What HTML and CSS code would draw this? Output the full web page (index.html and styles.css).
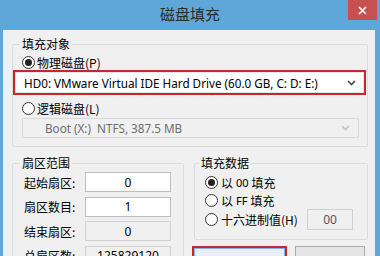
FILE: index.html
```html
<!DOCTYPE html>
<html lang="zh-CN">
<head>
    <meta charset="utf-8">
    <title>磁盘填充</title>
    <link rel="stylesheet" href="styles.css">
</head>
<body>
    <div class="window">
        <div class="titlebar">
            <span></span>
            <div class="title">磁盘填充</div>
            <div class="close">
                <svg width="9" height="9" viewBox="0 0 9 9"><path d="M1 1L8 8M8 1L1 8" stroke="#fff" stroke-width="1.6"/></svg>
            </div>
        </div>
        <div class="client">
            <fieldset class="group target">
                <legend>填充对象</legend>
                <div class="radio-row"><span class="radio checked"></span>物理磁盘(P)</div>
                <div class="combo highlight">
                    <span>HD0: VMware Virtual IDE Hard Drive (60.0 GB, C: D: E:)</span>
                    <svg width="9" height="6" viewBox="0 0 9 6"><path d="M1 1L4.5 4.5L8 1" fill="none" stroke="#4a4a4a" stroke-width="1.6"/></svg>
                </div>
                <div class="radio-row"><span class="radio"></span>逻辑磁盘(L)</div>
                <div class="combo disabled">
                    <span>Boot (X:)&nbsp;&nbsp;NTFS, 387.5 MB</span>
                    <svg width="9" height="6" viewBox="0 0 9 6"><path d="M1 1L4.5 4.5L8 1" fill="none" stroke="#c4c4c4" stroke-width="1.6"/></svg>
                </div>
            </fieldset>
            <div class="lower">
                <fieldset class="group range">
                    <legend>扇区范围</legend>
                    <div class="field"><span class="label">起始扇区:</span><div class="input">0</div></div>
                    <div class="field"><span class="label">扇区数目:</span><div class="input">1</div></div>
                    <div class="field"><span class="label">结束扇区:</span><div class="input off">0</div></div>
                    <div class="field"><span class="label">总扇区数:</span><div class="input off">125829120</div></div>
                </fieldset>
                <div class="right-col">
                    <fieldset class="group data">
                        <legend>填充数据</legend>
                        <div class="radio-row"><span class="radio checked"></span>以 <span class="latin">00</span> 填充</div>
                        <div class="radio-row"><span class="radio"></span>以 <span class="latin">FF</span> 填充</div>
                        <div class="radio-row hex">
                            <span class="radio"></span>十六进制值(H)
                            <div class="input off hex-input">00</div>
                        </div>
                    </fieldset>
                    <div class="buttons">
                        <div class="btn primary"></div>
                        <div class="btn"></div>
                    </div>
                </div>
            </div>
        </div>
    </div>
</body>
</html>
```

FILE: styles.css
```css
* { margin: 0; padding: 0; box-sizing: border-box; }
body {
    width: 380px; height: 256px; overflow: hidden;
    font-family: "Noto Sans", "Noto Sans CJK SC", sans-serif;
    font-size: 12px; color: #000;
}
.window {
    width: 380px; height: 256px; background: #5ea7d7;
    display: flex; flex-direction: column; overflow: hidden;
}
.titlebar {
    height: 30px; flex: none;
    display: grid; grid-template-columns: 1fr auto 1fr;
}
.title {
    font-family: "Noto Sans CJK SC", sans-serif;
    font-size: 15px; color: #2b2b2b; line-height: 28px;
}
.close {
    justify-self: end; margin-right: 3px;
    width: 29px; height: 20px; background: #c75050;
    display: flex; justify-content: center; align-items: center;
}
.client {
    flex: 1; background: #f0f0f0;
    margin: 0 5px 0 3px; padding: 6px 7px 0 9px;
}
.group {
    border: 1px solid #dcdcdc; border-radius: 2px;
    font-family: "Noto Sans CJK SC", sans-serif;
}
.group legend {
    padding: 0 2px; margin-left: 7px; line-height: 16px;
}
.target { padding: 2px 1px 8px 0; }
.radio-row {
    display: flex; align-items: center; height: 16px;
    font-family: "Noto Sans CJK SC", sans-serif;
}
.radio {
    width: 13px; height: 13px; border-radius: 50%;
    border: 1px solid #333; background: #fff; margin-right: 2px;
    display: flex; justify-content: center; align-items: center; flex: none;
}
.radio.checked::after {
    content: ""; width: 7px; height: 7px; border-radius: 50%; background: #222;
}
.target .radio-row { margin-left: 9px; }
.combo {
    display: flex; align-items: center; justify-content: space-between;
    font-family: "Noto Sans", sans-serif; font-size: 11.7px;
}
.combo.highlight {
    height: 25px; margin: 0 0 5px 0;
    border: 2px solid #c8262c; background: #fff;
    box-shadow: inset 0 0 0 1px #e6e6e6;
    padding: 0 8px 0 9px; color: #000;
}
.combo.disabled {
    height: 20px; margin: 2px 7px 0 9px;
    border: 1px solid #d9d9d9; background: #f0f0f0;
    padding: 0 8px 0 22px; color: #6d6d6d;
}
.lower {
    display: flex; gap: 10px; margin-top: 8px; align-items: flex-start;
}
.range { width: 172px; padding: 1px 0 8px 11px; }
.range legend { margin-left: -4px; }
.field { display: flex; align-items: center; height: 20px; margin-bottom: 4.5px; }
.label { width: 61px; font-size: 12px; }
.input {
    width: 86px; height: 20px; border: 1px solid #bdbdbd; background: #fff;
    font-family: "Noto Sans", sans-serif; font-size: 12px;
    display: flex; justify-content: center; align-items: center;
}
.input.off { background: #f0f0f0; border-color: #d0d0d0; }
.right-col { width: 174px; display: flex; flex-direction: column; }
.data { padding: 3px 0 9px 10px; }
.data legend { margin-left: -6px; }
.data .radio-row { margin-bottom: 2.5px; }
.data .radio { margin-right: 3px; }
.latin { font-family: "Noto Sans", sans-serif; font-size: 11px; margin: 0 3px; }
.hex-input { width: 46px; height: 21px; margin-left: auto; margin-right: 14px; color: #555; }
.buttons { display: flex; gap: 8px; margin-top: 6px; margin-left: -2px; }
.btn {
    height: 24px; width: 70px; border: 1px solid #acacac; background: #e5e5e5;
}
.btn.primary { width: 95px; border: 2px solid #c8262c; background: #e9eff6; box-shadow: inset 0 0 0 1px #7eb4ea; }
```
